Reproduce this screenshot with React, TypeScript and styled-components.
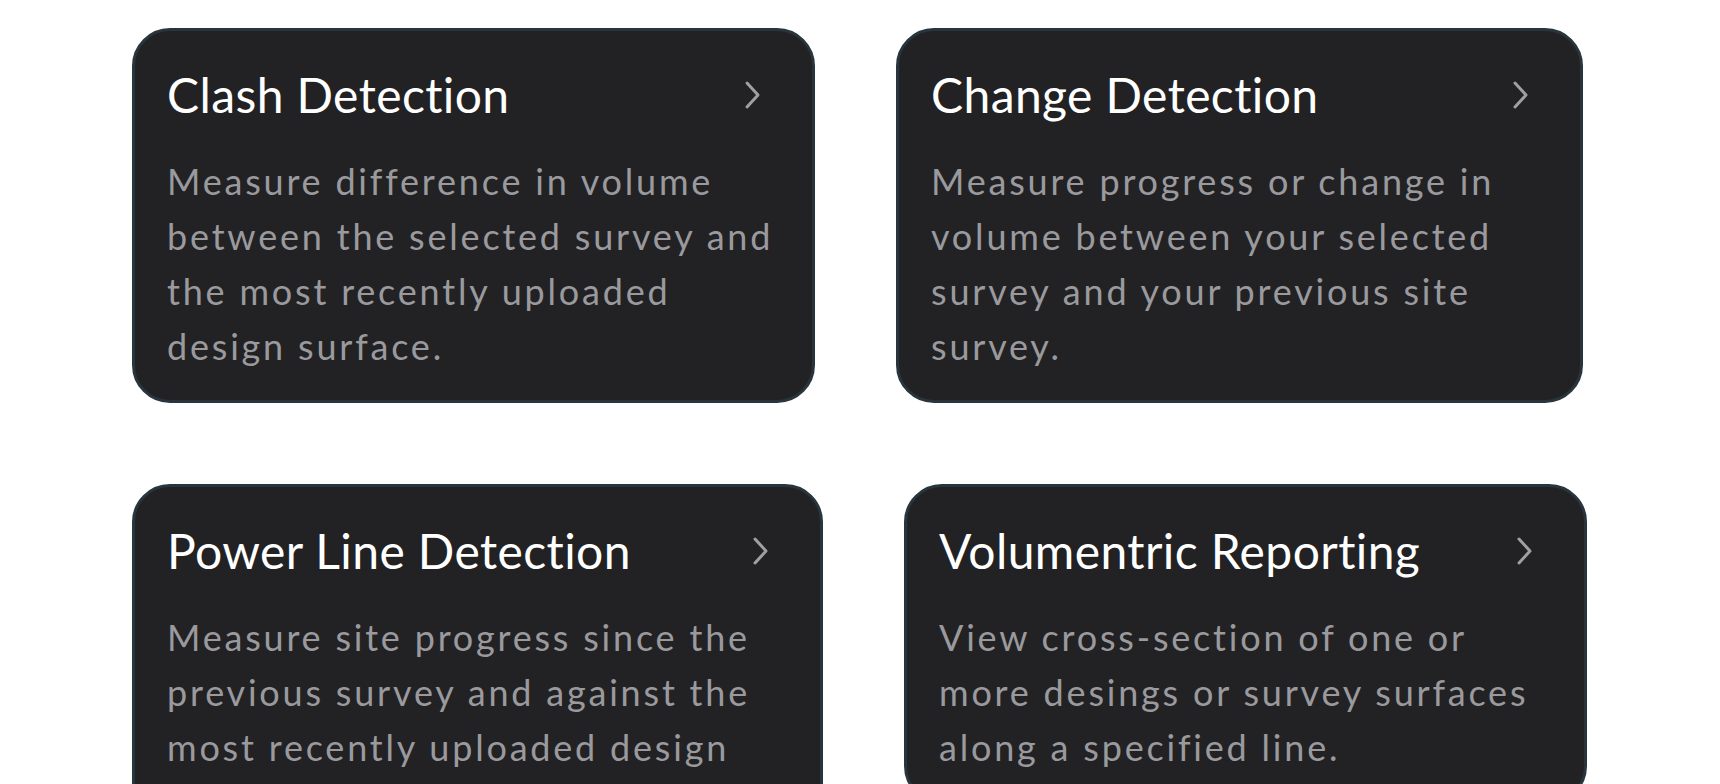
import React from "react";
import styled, { createGlobalStyle } from "styled-components";

const Global = createGlobalStyle`
  html, body { margin: 0; padding: 0; background: #ffffff; overflow: hidden; }
  body { font-family: "Lato", "Open Sans", sans-serif; }
`;

const Page = styled.main`
  display: flex;
  flex-direction: column;
  gap: 81px;
  padding: 28px 0 0 132px;
`;

const Row = styled.div`
  display: flex;
  align-items: flex-start;
  gap: 81px;
`;

const Card = styled.section<{ $width: number }>`
  box-sizing: border-box;
  width: ${(p) => p.$width}px;
  background: #222224;
  border: 3px solid #28353d;
  border-radius: 38px;
  padding: 34px 32px 26px 32px;
  display: flex;
  flex-direction: column;
  gap: 29px;
`;

const Header = styled.div`
  display: flex;
  align-items: center;
  justify-content: space-between;
`;

const Title = styled.h2`
  margin: 0;
  font-family: "Lato", "Open Sans", sans-serif;
  font-weight: 400;
  font-size: 48px;
  line-height: 60px;
  letter-spacing: 0.4px;
  color: #ffffff;
  white-space: nowrap;
`;

const Description = styled.p`
  margin: 0;
  font-family: "Lato", "Open Sans", sans-serif;
  font-weight: 400;
  font-size: 36px;
  line-height: 55px;
  letter-spacing: 2.8px;
  color: #9a9a9e;
`;

const Line = styled.span`
  display: block;
  white-space: nowrap;
`;

const ChevronIcon = styled.svg`
  flex: none;
  margin-right: 18px;
`;

const Chevron = () => (
  <ChevronIcon width="18" height="30" viewBox="0 0 18 30" fill="none">
    <path d="M3 3 L14 15 L3 27" stroke="#a0a0a3" strokeWidth="3" strokeLinecap="round" strokeLinejoin="round" />
  </ChevronIcon>
);

type Item = { title: string; lines: string[]; width: number };

const rows: Item[][] = [
  [
    {
      title: "Clash Detection",
      lines: [
        "Measure difference in volume",
        "between the selected survey and",
        "the most recently uploaded",
        "design surface.",
      ],
      width: 683,
    },
    {
      title: "Change Detection",
      lines: [
        "Measure progress or change in",
        "volume between your selected",
        "survey and your previous site",
        "survey.",
      ],
      width: 687,
    },
  ],
  [
    {
      title: "Power Line Detection",
      lines: [
        "Measure site progress since the",
        "previous survey and against the",
        "most recently uploaded design",
        "surface.",
      ],
      width: 691,
    },
    {
      title: "Volumentric Reporting",
      lines: [
        "View cross-section of one or",
        "more desings or survey surfaces",
        "along a specified line.",
      ],
      width: 683,
    },
  ],
];

export default function App() {
  return (
    <>
      <Global />
      <Page>
        {rows.map((row, i) => (
          <Row key={i}>
            {row.map((item) => (
              <Card key={item.title} $width={item.width}>
                <Header>
                  <Title>{item.title}</Title>
                  <Chevron />
                </Header>
                <Description>
                  {item.lines.map((l) => (
                    <Line key={l}>{l}</Line>
                  ))}
                </Description>
              </Card>
            ))}
          </Row>
        ))}
      </Page>
    </>
  );
}
